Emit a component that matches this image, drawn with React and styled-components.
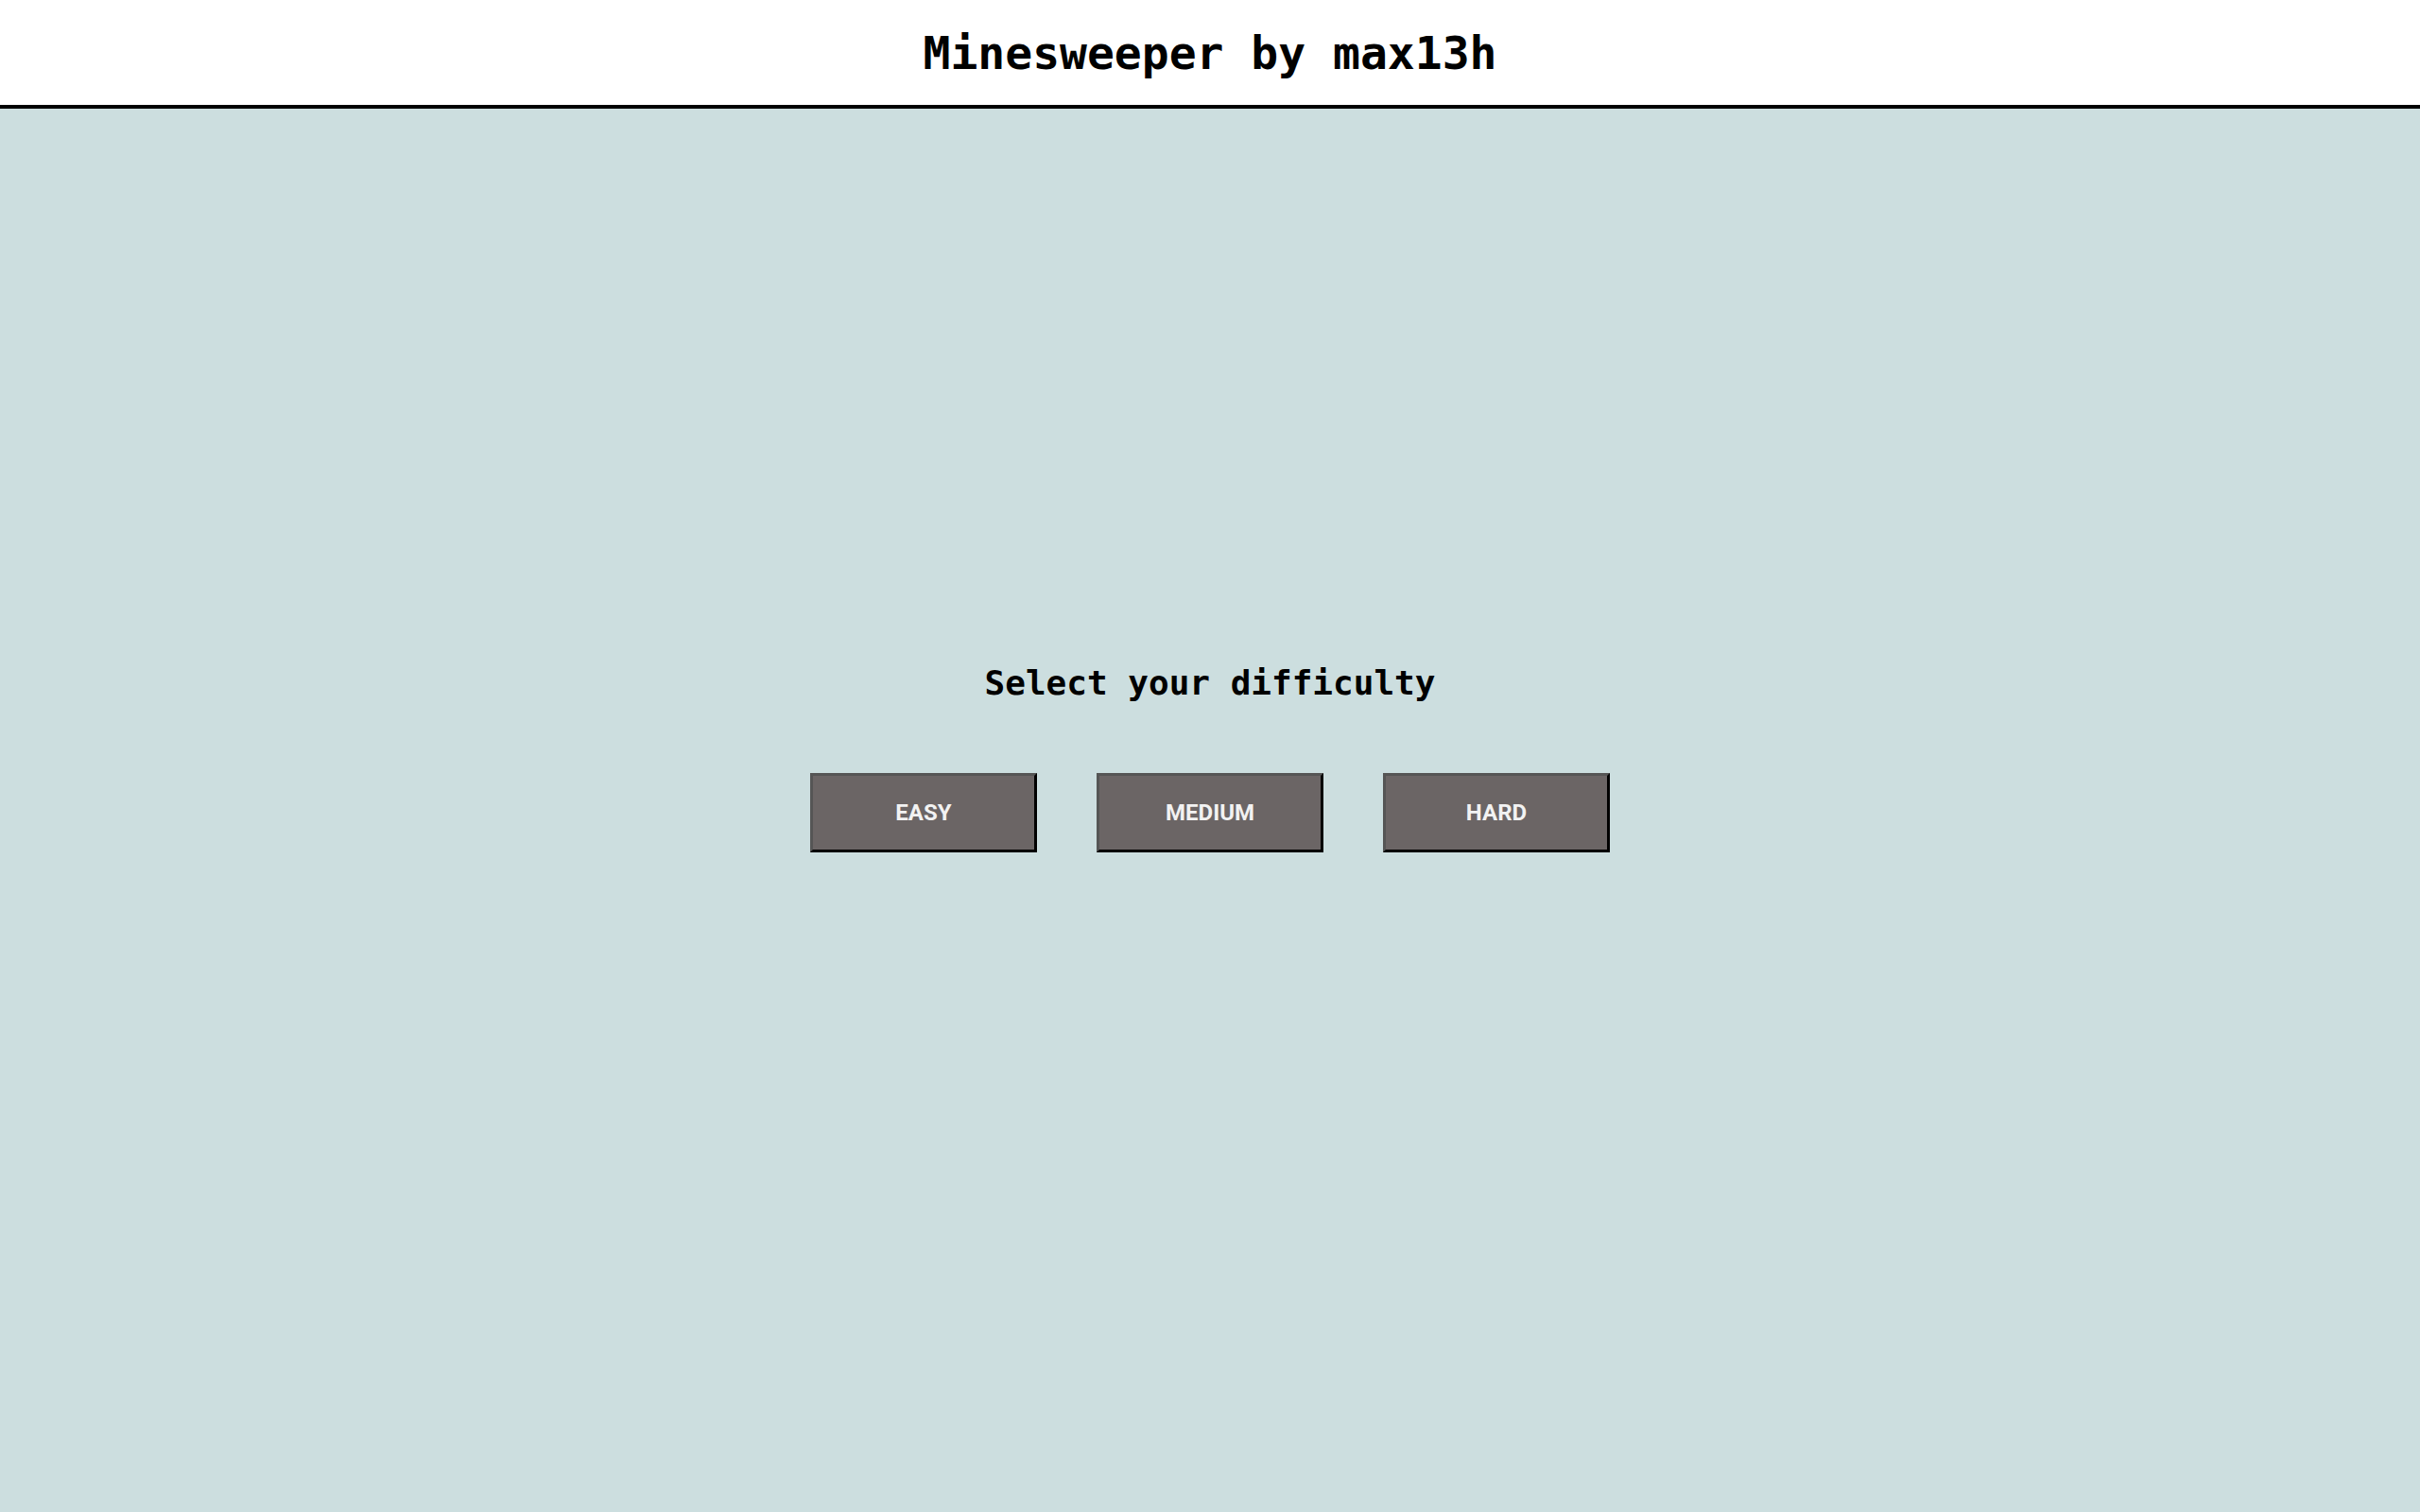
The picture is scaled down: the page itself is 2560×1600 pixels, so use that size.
import React from "react";
import styled, { createGlobalStyle } from "styled-components";

const GlobalStyle = createGlobalStyle`
  html, body {
    margin: 0;
    padding: 0;
    background: #ccdedf;
  }
  * {
    box-sizing: border-box;
  }
`;

const Header = styled.header`
  height: 115px;
  background: #ffffff;
  border-bottom: 4px solid #000000;
  display: flex;
  align-items: center;
  justify-content: center;
`;

const Title = styled.h1`
  margin: 0;
  font-family: "DejaVu Sans Mono", "Liberation Mono", monospace;
  font-weight: bold;
  font-size: 48px;
  line-height: 1;
  color: #000000;
`;

const Main = styled.main`
  display: flex;
  flex-direction: column;
  align-items: center;
  padding-top: 590px;
  min-height: calc(100vh - 115px);
`;

const Heading = styled.h2`
  margin: 0 0 77px 0;
  font-family: "DejaVu Sans Mono", "Liberation Mono", monospace;
  font-weight: bold;
  font-size: 36px;
  line-height: 1;
  color: #000000;
`;

const Choices = styled.div`
  display: flex;
  gap: 63px;
`;

const Difficulty = styled.button`
  width: 240px;
  height: 84px;
  background: #6b6565;
  border: 3px solid;
  border-color: #555555 #000000 #000000 #555555;
  color: #f2f2f2;
  font-family: Roboto, "Liberation Sans", sans-serif;
  font-weight: bold;
  font-size: 24px;
  text-transform: uppercase;
  cursor: pointer;
  padding: 0;

  &:hover {
    background: #5e5858;
  }
`;

const levels = ["Easy", "Medium", "Hard"];

const App = () => (
  <>
    <GlobalStyle />
    <Header>
      <Title>Minesweeper by max13h</Title>
    </Header>
    <Main>
      <Heading>Select your difficulty</Heading>
      <Choices>
        {levels.map(level => (
          <Difficulty key={level}>{level}</Difficulty>
        ))}
      </Choices>
    </Main>
  </>
);

export default App;
